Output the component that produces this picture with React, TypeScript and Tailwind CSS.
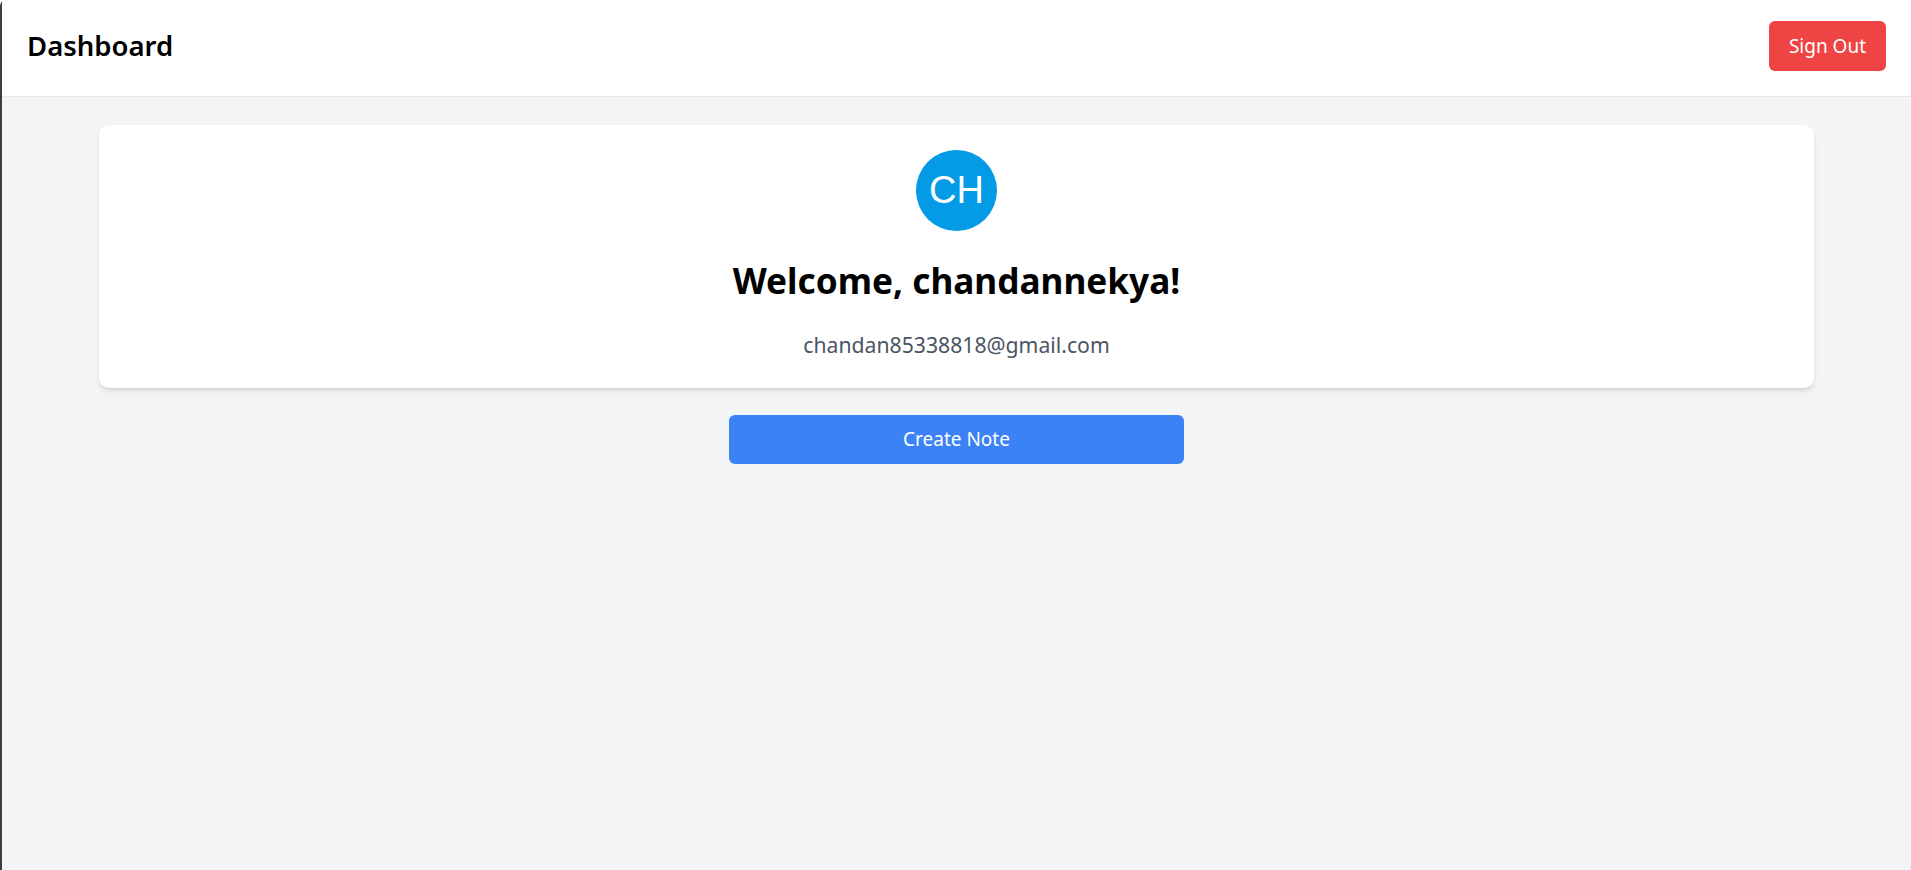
export default function App() {
  const font = { fontFamily: '"Segoe UI", "Noto Sans", sans-serif' };
  return (
    <div
      className="min-h-screen bg-[#f3f4f6] border-l-2 border-[#3c3c3c] rounded-tl-[6px]"
      style={font}
    >
      <header className="flex items-center justify-between bg-white border-b border-[#e5e7eb] pl-[25px] pr-[25px] pt-[21px] pb-[25px]">
        <h1 className="text-[27.5px] leading-[36px] font-semibold text-black">Dashboard</h1>
        <button className="h-[50px] w-[117px] rounded-[6px] bg-[#ef4444] text-[19px] text-white">
          Sign Out
        </button>
      </header>

      <main className="flex flex-col items-center">
        <section className="mt-[28px] w-[1715px] rounded-[10px] bg-white shadow-md pt-[25px] pb-[26px] flex flex-col items-center">
          <div
            className="flex h-[81px] w-[81px] items-center justify-center rounded-full bg-[#039be5] text-[38px] text-white"
            style={{ fontFamily: '"Liberation Sans", Arial, sans-serif' }}
          >
            CH
          </div>
          <h2 className="mt-[27px] text-[35.2px] leading-[45px] font-bold text-black">
            Welcome, chandannekya!
          </h2>
          <p className="mt-[24px] text-[21.2px] leading-[35px] text-[#4b5563]">
            chandan85338818@gmail.com
          </p>
        </section>

        <button className="mt-[27px] h-[49px] w-[455px] rounded-[6px] bg-[#3b82f6] text-[19px] text-white">
          Create Note
        </button>
      </main>
    </div>
  );
}
